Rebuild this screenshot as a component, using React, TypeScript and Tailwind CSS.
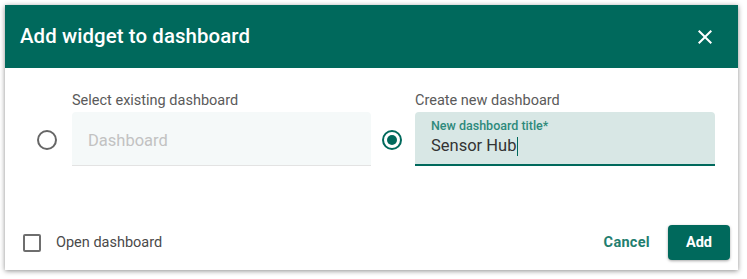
import React from "react";

const font = { fontFamily: "Roboto, 'Noto Sans', sans-serif" };

function Radio({ checked }: { checked?: boolean }) {
  return checked ? (
    <span className="flex h-[20px] w-[20px] shrink-0 items-center justify-center rounded-full border-2 border-[#00695c]">
      <span className="h-[10px] w-[10px] rounded-full bg-[#00695c]" />
    </span>
  ) : (
    <span className="block h-[20px] w-[20px] shrink-0 rounded-full border-2 border-[#666666]" />
  );
}

export default function App() {
  return (
    <div className="min-h-screen bg-white p-[5px]" style={font}>
      <div className="flex h-[265px] w-[733px] flex-col bg-white shadow-[0_1px_5px_rgba(0,0,0,0.45)]">
        <header className="flex h-[63px] shrink-0 items-center justify-between bg-[#00695c] pl-[15px] pr-[21px]">
          <h2 className="text-[20.4px] font-medium leading-none tracking-[0.1px] text-white">
            Add widget to dashboard
          </h2>
          <svg width="24" height="24" viewBox="0 0 24 24" fill="white">
            <path d="M19 6.41L17.59 5 12 10.59 6.41 5 5 6.41 10.59 12 5 17.59 6.41 19 12 13.41 17.59 19 19 17.59 13.41 12z" />
          </svg>
        </header>

        <div className="flex flex-1 items-start pl-[32px] pr-[23px] pt-[25px]">
          <div className="flex items-center">
            <div className="mt-[21px]">
              <Radio />
            </div>
            <div className="ml-[15px] w-[299px]">
              <div className="mb-[3px] text-[14.5px] leading-[16px] text-[#5a5a5a]">
                Select existing dashboard
              </div>
              <div className="flex h-[54px] items-center rounded-t-[4px] border-b border-[#e3e3e3] bg-[#f5f9f9] px-[16px] pt-[5px] text-[16.5px] text-[#c2c2c2]">
                Dashboard
              </div>
            </div>
          </div>
          <div className="ml-[11px] flex items-center">
            <div className="mt-[21px]">
              <Radio checked />
            </div>
            <div className="ml-[13px] w-[300px]">
              <div className="mb-[3px] text-[14.5px] leading-[16px] text-[#5a5a5a]">
                Create new dashboard
              </div>
              <div className="flex h-[54px] flex-col justify-center rounded-t-[4px] border-b-2 border-[#00695c] bg-[#d8e7e5] px-[16px]">
                <span className="text-[12.5px] font-medium leading-[14px] text-[#2e8a7c]">
                  New dashboard title*
                </span>
                <span className="mt-[2px] flex items-center text-[16.5px] leading-[22px] text-[#333333]">
                  Sensor Hub
                  <span className="ml-px h-[19px] w-px bg-[#00695c]" />
                </span>
              </div>
            </div>
          </div>
        </div>

        <footer className="flex h-[45px] shrink-0 items-start justify-between pb-[10px] pl-[18px] pr-[8px]">
          <label className="flex h-[35px] items-center">
            <span className="h-[18px] w-[18px] rounded-[2px] border-2 border-[#6e6e6e]" />
            <span className="ml-[15px] text-[14.5px] text-[#4a4a4a]">Open dashboard</span>
          </label>
          <div className="flex items-center">
            <button className="h-[35px] px-[8px] text-[14.5px] font-bold tracking-[0.3px] text-[#1f7e6f]">
              Cancel
            </button>
            <button className="ml-[10px] h-[35px] w-[62px] rounded-[4px] bg-[#00695c] text-[14.5px] font-bold text-white shadow-[0_1px_3px_rgba(0,0,0,0.35)]">
              Add
            </button>
          </div>
        </footer>
      </div>
    </div>
  );
}
